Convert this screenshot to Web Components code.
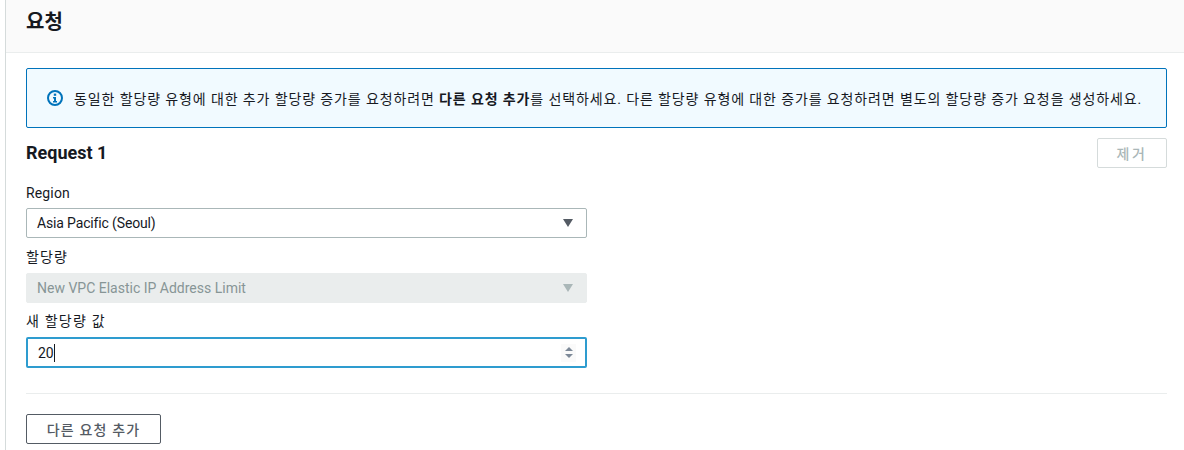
<!DOCTYPE html>
<html lang="ko">
<head>
<meta charset="utf-8">
<title>요청</title>
<style>
  html, body { margin: 0; padding: 0; background: #fff; }
  body {
    height: 450px;
    overflow: hidden;
    font-family: Roboto, "Noto Sans CJK KR", sans-serif;
    color: #16191f;
  }
</style>
</head>
<body>
<request-panel title-text="요청">
  <info-alert>동일한 할당량 유형에 대한 추가 할당량 증가를 요청하려면 <b>다른 요청 추가</b>를 선택하세요. 다른 할당량 유형에 대한 증가를 요청하려면 별도의 할당량 증가 요청을 생성하세요.</info-alert>
  <request-head>Request 1</request-head>
  <form-field label="Region" style="--top:16px;--label-gap:5px;--label-spacing:.15px"><select-box style="letter-spacing:-.15px">Asia Pacific (Seoul)</select-box></form-field>
  <form-field label="할당량" style="--top:10px;--label-gap:6px;--label-spacing:1.1px"><select-box disabled>New VPC Elastic IP Address Limit</select-box></form-field>
  <form-field label="새 할당량 값" style="--top:9px;--label-gap:6px;--label-spacing:1.2px"><number-box>20</number-box></form-field>
  <add-row>다른 요청 추가</add-row>
</request-panel>

<script>
customElements.define('request-panel', class extends HTMLElement {
  constructor () {
    super()
    this.attachShadow({ mode: 'open' }).innerHTML = `
<style>
  :host { display: block; margin-left: 5px; border-left: 1px solid #d5dbdb; height: 450px; }
  header {
    height: 53px;
    box-sizing: border-box;
    background: #fafafa;
    border-bottom: 1px solid #eaeded;
    padding: 7px 20px 0;
    font-size: 20px;
    line-height: 30px;
    font-weight: 700;
  }
  main { padding: 15px 17px 0 20px; }
</style>
<header></header>
<main><slot></slot></main>`
    this.shadowRoot.querySelector('header').textContent = this.getAttribute('title-text')
  }
})

customElements.define('info-alert', class extends HTMLElement {
  constructor () {
    super()
    this.attachShadow({ mode: 'open' }).innerHTML = `
<style>
  :host {
    display: flex;
    align-items: center;
    gap: 11px;
    box-sizing: border-box;
    height: 60px;
    padding: 0 20px;
    background: #f1faff;
    border: 1px solid #0073bb;
    border-radius: 2px;
    font-size: 14px;
    letter-spacing: 0.88px;
    white-space: nowrap;
  }
  svg { flex: none; }
  ::slotted(b) { font-weight: 700; }
</style>
<svg width="16" height="16" viewBox="0 0 16 16">
  <circle cx="8" cy="8" r="7" fill="none" stroke="#0073bb" stroke-width="2"/>
  <rect x="6.8" y="3.6" width="2.4" height="2.2" fill="#0073bb"/>
  <path d="M6 7h3v4h1v1.4H6V11h1V8.4H6z" fill="#0073bb"/>
</svg>
<span><slot></slot></span>`
  }
})

customElements.define('request-head', class extends HTMLElement {
  constructor () {
    super()
    this.attachShadow({ mode: 'open' }).innerHTML = `
<style>
  :host {
    display: flex;
    justify-content: space-between;
    align-items: flex-start;
    margin-top: 10px;
    height: 30px;
  }
  h3 { margin: 0; font-size: 18px; line-height: 30px; font-weight: 700; }
  button {
    width: 70px;
    height: 30px;
    padding: 0;
    background: #fff;
    border: 1px solid #d5dbdb;
    border-radius: 2px;
    color: #aab7b8;
    font: 500 14px Roboto, "Noto Sans CJK KR", sans-serif;
    letter-spacing: 2.5px;
  }
</style>
<h3><slot></slot></h3>
<button disabled>제거</button>`
  }
})

customElements.define('form-field', class extends HTMLElement {
  constructor () {
    super()
    this.attachShadow({ mode: 'open' }).innerHTML = `
<style>
  :host { display: block; width: 561px; padding-top: var(--top, 15px); }
  label {
    display: block;
    font-size: 14px;
    line-height: 19px;
    letter-spacing: var(--label-spacing, 0);
    margin-bottom: var(--label-gap, 6px);
  }
</style>
<label></label>
<slot></slot>`
    this.shadowRoot.querySelector('label').textContent = this.getAttribute('label')
  }
})

customElements.define('select-box', class extends HTMLElement {
  constructor () {
    super()
    this.attachShadow({ mode: 'open' }).innerHTML = `
<style>
  :host {
    display: flex;
    align-items: center;
    justify-content: space-between;
    box-sizing: border-box;
    height: 30px;
    padding: 0 13px 0 10px;
    background: #fff;
    border: 1px solid #aab7b8;
    border-radius: 2px;
    font-size: 14px;
  }
  :host([disabled]) { background: #eaeded; border-color: #eaeded; color: #879596; }
  svg { fill: #545b64; }
  :host([disabled]) svg { fill: #aab7b8; }
</style>
<span><slot></slot></span>
<svg width="10" height="8" viewBox="0 0 10 8"><path d="M0 0h10L5 8z"/></svg>`
  }
})

customElements.define('number-box', class extends HTMLElement {
  constructor () {
    super()
    this.attachShadow({ mode: 'open' }).innerHTML = `
<style>
  :host {
    display: flex;
    align-items: center;
    justify-content: space-between;
    box-sizing: border-box;
    height: 31px;
    padding: 0 9px 0 10px;
    background: #fff;
    border: 2px solid #2e9ccf;
    border-radius: 2px;
    font-size: 14px;
  }
  .val { display: flex; align-items: center; }
  i { display: block; width: 1px; height: 18px; background: #16191f; }
  .spin {
    display: flex;
    align-items: center;
    justify-content: center;
    width: 15px;
    height: 18px;
    background: #fafafa;
  }
  svg { fill: #7d8998; }
</style>
<span class="val"><slot></slot><i></i></span>
<span class="spin"><svg width="8" height="11" viewBox="0 0 8 11"><path d="M4 0l4 4H0zM0 7h8l-4 4z"/></svg></span>`
  }
})

customElements.define('add-row', class extends HTMLElement {
  constructor () {
    super()
    this.attachShadow({ mode: 'open' }).innerHTML = `
<style>
  :host { display: block; margin-top: 25px; padding-top: 20px; border-top: 1px solid #eaeded; }
  button {
    display: block;
    width: 135px;
    height: 30px;
    padding: 0;
    background: #fff;
    border: 1px solid #545b64;
    border-radius: 2px;
    color: #545b64;
    font: 500 14px Roboto, "Noto Sans CJK KR", sans-serif;
    letter-spacing: 1.15px;
  }
</style>
<button><slot></slot></button>`
  }
})
</script>
</body>
</html>
